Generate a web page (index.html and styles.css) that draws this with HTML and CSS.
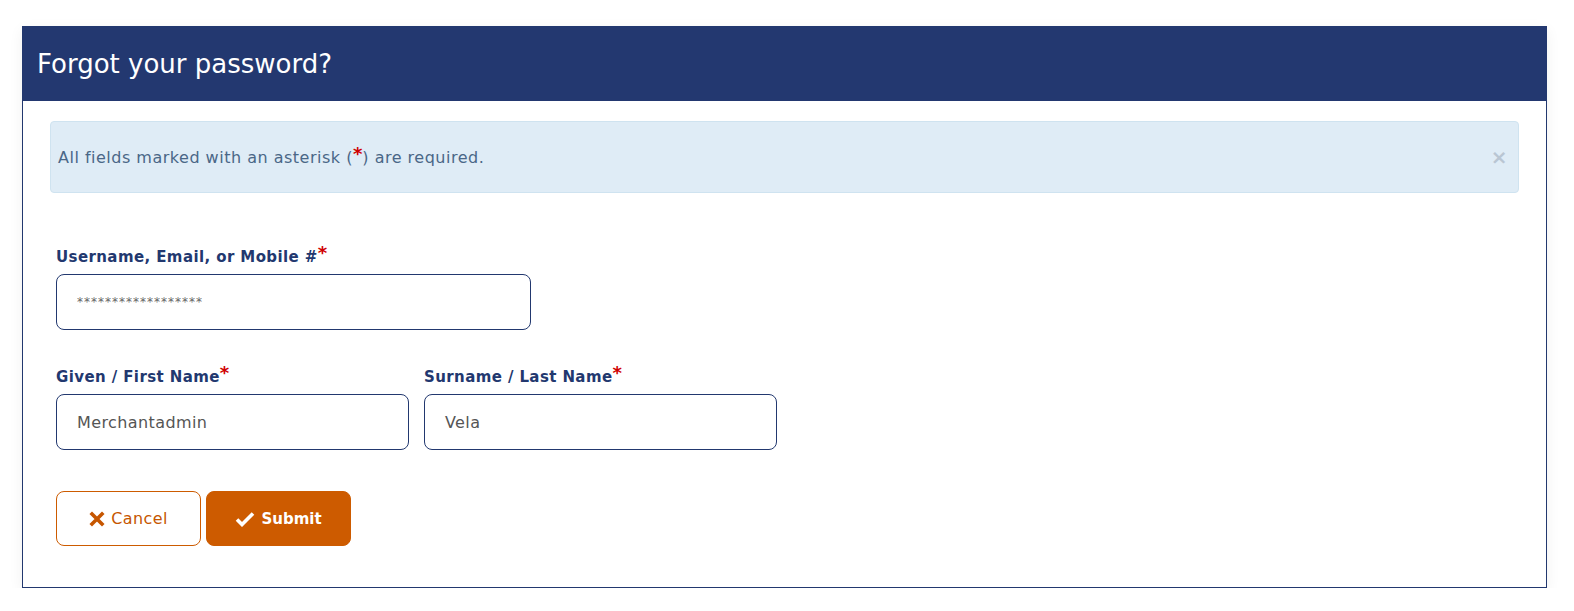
FILE: index.html
```html
<!DOCTYPE html>
<html lang="en">
<head>
<meta charset="utf-8">
<title>Forgot your password?</title>
<link rel="stylesheet" href="styles.css">
</head>
<body>
<div class="panel">
  <div class="panel-head"><h1>Forgot your password?</h1></div>
  <div class="panel-body">
    <div class="alert">
      <span>All fields marked with an asterisk (<span class="req">*</span>) are required.</span>
      <span class="close">&times;</span>
    </div>
    <form class="form">
      <div class="row">
        <div class="field wide">
          <label>Username, Email, or Mobile #<span class="req">*</span></label>
          <div class="input mask">******************</div>
        </div>
      </div>
      <div class="row">
        <div class="field">
          <label>Given / First Name<span class="req">*</span></label>
          <div class="input">Merchantadmin</div>
        </div>
        <div class="field">
          <label>Surname / Last Name<span class="req">*</span></label>
          <div class="input">Vela</div>
        </div>
      </div>
      <div class="actions">
        <button type="button" class="btn btn-outline">
          <svg width="16" height="16" viewBox="0 0 16 16"><path d="M3 3 L13 13 M13 3 L3 13" stroke="currentColor" stroke-width="3.6" stroke-linecap="square"/></svg>
          Cancel
        </button>
        <button type="button" class="btn btn-fill">
          <svg width="20" height="16" viewBox="0 0 20 16"><path d="M2 8.5 L7 13.5 L18 2.5" fill="none" stroke="currentColor" stroke-width="3.6"/></svg>
          Submit
        </button>
      </div>
    </form>
  </div>
</div>
</body>
</html>
```
FILE: styles.css
```css
html, body { margin: 0; padding: 0; background: #fff; }
body {
  font-family: "DejaVu Sans", "Open Sans", sans-serif;
  padding: 26px 27px 0 22px;
}
.panel {
  border: 1px solid #22386f;
  background: #fff;
  box-shadow: 0 4px 14px rgba(0,0,0,0.06);
}
.panel-head {
  background: #233870;
  height: 74px;
  display: flex;
  align-items: center;
  padding: 0 14px;
}
.panel-head h1 {
  margin: 0;
  color: #fff;
  font-weight: 400;
  font-size: 26px;
}
.panel-body { padding: 20px 27px 41px 27px; }
.alert {
  height: 70px;
  background: #dfecf6;
  border: 1px solid #cfe3f0;
  border-radius: 4px;
  display: flex;
  align-items: center;
  justify-content: space-between;
  padding: 0 10px 0 7px;
  color: #4a6787;
  font-size: 16px;
  letter-spacing: 0.5px;
}
.req { color: #d00000; font-weight: 700; font-size: 18px; vertical-align: top; line-height: 1; position: relative; top: -3px; letter-spacing: 0; }
.close { color: #b9c6d3; font-size: 20px; font-weight: 700; }
.form { padding: 0 6px; margin-top: 54px; }
.row { display: flex; gap: 15px; margin-bottom: 37px; }
.field { display: flex; flex-direction: column; width: 353px; }
.field.wide { width: 475px; }
label {
  display: block;
  color: #22386f;
  font-weight: 700;
  font-size: 15px;
  letter-spacing: 0.4px;
  line-height: 20px;
  margin-bottom: 7px;
}
.input {
  height: 56px;
  box-sizing: border-box;
  border: 1px solid #22386f;
  border-radius: 8px;
  display: flex;
  align-items: center;
  padding: 0 20px;
  color: #555;
  font-size: 16px;
  letter-spacing: 0.4px;
}
.input.mask { font-size: 12px; color: #666; letter-spacing: 1px; }
.actions { display: flex; gap: 5px; margin-top: 41px; }
.btn {
  width: 145px;
  height: 55px;
  box-sizing: border-box;
  border-radius: 8px;
  font-family: inherit;
  font-size: 16px;
  display: flex;
  align-items: center;
  justify-content: center;
  gap: 6px;
  cursor: pointer;
}
.btn-outline { background: #fff; border: 1px solid #cd5b00; color: #c65600; letter-spacing: 0.4px; }
.btn-fill { background: #cd5b00; border: 1px solid #cd5b00; color: #fff; font-weight: 700; font-size: 15px; }
```
